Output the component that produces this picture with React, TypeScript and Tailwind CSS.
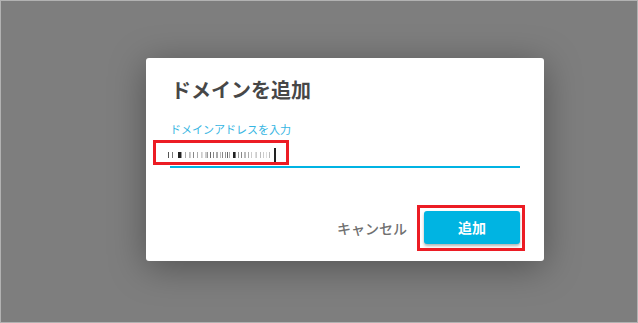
import React from "react";

const bars: [number, number, string][] = [
  [20, 1, "#555"],
  [24, 1, "#777"],
  [30, 3, "#222"],
  [33, 1, "#999"],
  [37, 1, "#aaa"],
  [41, 1, "#bbb"],
  [42, 1, "#ccc"],
  [45, 1, "#888"],
  [49, 1, "#aaa"],
  [53, 1, "#ccc"],
  [54, 1, "#ddd"],
  [57, 2, "#ccc"],
  [59, 1, "#999"],
  [62, 1, "#666"],
  [65, 1, "#888"],
  [68, 2, "#aaa"],
  [72, 1, "#bbb"],
  [74, 1, "#888"],
  [77, 1, "#999"],
  [79, 1, "#666"],
  [81, 1, "#aaa"],
  [85, 2, "#222"],
  [87, 1, "#777"],
  [90, 1, "#999"],
  [93, 1, "#888"],
  [96, 2, "#bbb"],
  [100, 1, "#aaa"],
  [103, 1, "#ccc"],
  [107, 1, "#ddd"],
  [108, 1, "#ccc"],
  [112, 1, "#bbb"],
  [115, 1, "#ccc"],
  [118, 1, "#ddd"],
  [121, 1, "#bbb"],
];

export default function App() {
  return (
    <div className="relative w-[638px] h-[323px] bg-[#7e7e7e] border border-[#b2b2b2] flex items-start overflow-hidden" style={{ fontFamily: '"Noto Sans CJK JP", "Noto Sans", sans-serif' }}>
      <div className="relative mt-[57px] ml-[145px] w-[398px] h-[203px] bg-white rounded-[3px] shadow-[0_6px_36px_rgba(0,0,0,0.35)] px-[24px] pt-[20px] flex flex-col">
        <h1 className="text-[20px] leading-[24px] font-bold text-[#474747] ml-[1px]">ドメインを追加</h1>
        <div className="mt-[20px] text-[11px] leading-[14px] text-[#35b5e2]">ドメインアドレスを入力</div>
        <div className="relative mt-[8px] h-[24px] border-b-2 border-[#00b3e3]">
          <svg width="130" height="22" className="absolute left-[-22px] top-[0px]" viewBox="0 0 130 22">
            {bars.map(([x, w, c], i) => (
              <rect key={i} x={x} y={8} width={w} height={6} fill={c} />
            ))}
            <rect x={126} y={4} width={2} height={14} fill="#222" />
          </svg>
        </div>
        <div className="mt-auto mb-[17px] flex items-center justify-end gap-[17px]">
          <button className="text-[14px] leading-[20px] text-[#707070] font-medium">キャンセル</button>
          <button className="w-[96px] h-[33px] rounded-[3px] bg-[#00b4e2] text-white text-[14px] font-bold shadow-[0_2px_3px_rgba(0,0,0,0.3)]">追加</button>
        </div>
        <div className="absolute left-[7px] top-[82px] w-[136px] h-[25px] border-[3px] border-[#ec1c24]" />
        <div className="absolute left-[271px] top-[147px] w-[108px] h-[46px] border-[3px] border-[#ec1c24]" />
      </div>
    </div>
  );
}
